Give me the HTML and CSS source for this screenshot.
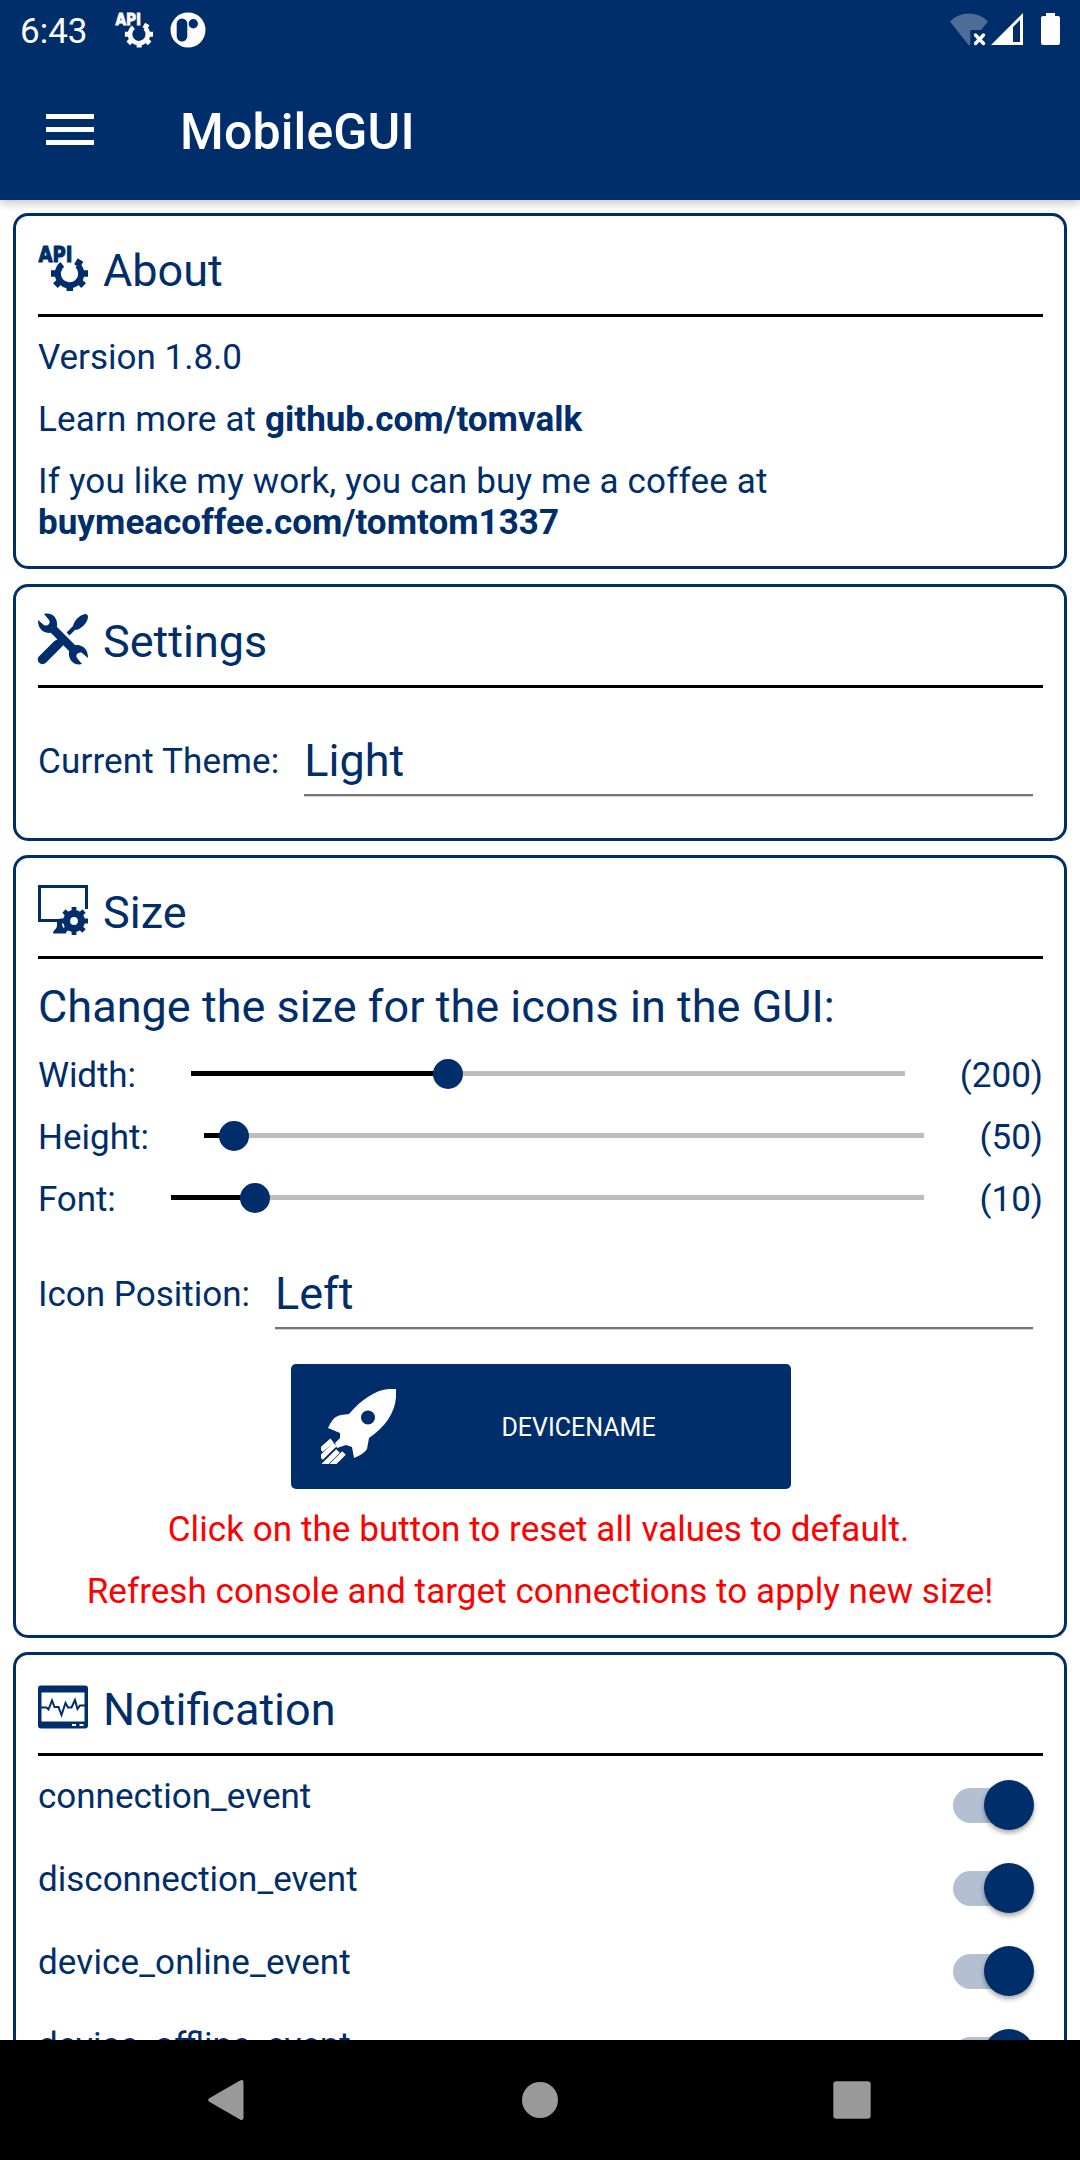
FILE: index.html
```html
<!DOCTYPE html>
<html lang="en">
<head>
<meta charset="utf-8">
<title>MobileGUI</title>
<link rel="stylesheet" href="styles.css">
</head>
<body>
<div class="screen">
  <header class="top">
    <div class="status">
      <span class="clock">6:43</span>
      <svg class="st-api" viewBox="0 0 50 50">
        <text x=".5" y="19" class="api-text" textLength="34" lengthAdjust="spacingAndGlyphs">API</text>
        <path d="M24.3 21.4A11.7 11.7 0 1 0 39.6 22.2" fill="none" stroke="currentColor" stroke-width="6"/>
        <path d="M19 30.5h-6M21 39l-3.6 3.6M31.8 42v6M42 39l3.6 3.6M44 30.5h6M39 23l3.5-6" fill="none" stroke="currentColor" stroke-width="6.6"/>
      </svg>
      <svg class="st-p" viewBox="0 0 36 36"><path fill="currentColor" fill-rule="evenodd" d="M18 .5a17.5 17.5 0 1 1 0 35a17.5 17.5 0 0 1 0-35zM12 6.5a5.3 5.3 0 0 0-5.3 5.3v12.4a5.3 5.3 0 0 0 10.6 0V11.8a5.3 5.3 0 0 0-5.3-5.3zM23.3 7a4.7 4.7 0 1 0 0 9.4a4.7 4.7 0 0 0 0-9.4z"/></svg>
      <span class="spring"></span>
      <svg class="st-wifi" viewBox="0 0 38 33"><path fill="#fff" fill-opacity=".3" d="M0 8.5C10-2.3 28-2.3 38 8.5L31 17H20.3v14.3L19 32.5z"/><path d="M25.5 22l8 8.5M33.5 22l-8 8.5" stroke="#fff" stroke-width="3.4" stroke-linecap="round"/></svg>
      <svg class="st-signal" viewBox="0 0 32 32"><path fill="#fff" fill-rule="evenodd" d="M32 0v32H0zM22 14v15h7V7z"/></svg>
      <svg class="st-batt" viewBox="0 0 19 32"><path fill="#fff" d="M5 0h9v3h3q2 0 2 2v25q0 2-2 2H2q-2 0-2-2V5q0-2 2-2h3z"/></svg>
    </div>
    <div class="appbar">
      <span class="menu"><i></i><i></i><i></i></span>
      <h1>MobileGUI</h1>
    </div>
  </header>

  <main class="content">
    <section class="card about">
      <div class="head">
        <svg class="icon" viewBox="0 0 50 50">
          <text x=".5" y="19" class="api-text" textLength="34" lengthAdjust="spacingAndGlyphs">API</text>
          <path d="M24.3 21.4A11.7 11.7 0 1 0 39.6 22.2" fill="none" stroke="currentColor" stroke-width="6"/>
          <path d="M19 30.5h-6M21 39l-3.6 3.6M31.8 42v6M42 39l3.6 3.6M44 30.5h6M39 23l3.5-6" fill="none" stroke="currentColor" stroke-width="6.6"/>
        </svg>
        <h2>About</h2>
      </div>
      <p>Version 1.8.0</p>
      <p><span class="learn">Learn more at </span><b>github.com/tomvalk</b></p>
      <p><span class="coffee">If you like my work, you can buy me a coffee at</span><br><b class="link">buymeacoffee.com/tomtom1337</b></p>
    </section>

    <section class="card settings">
      <div class="head">
        <svg class="icon" viewBox="0 0 50 50">
          <path d="M4.5 45.5L19 31" stroke="currentColor" stroke-width="9.5" stroke-linecap="round"/>
          <path d="M18 26.5l6 6" stroke="currentColor" stroke-width="4"/>
          <path d="M30 20l9-9" stroke="currentColor" stroke-width="4"/>
          <path fill="currentColor" d="M35 13c0-5 6-12 12-13q3 0 3 3c-.5 6-7 12-12 13z"/>
          <path d="M13 13L38 38" stroke="currentColor" stroke-width="8.5"/>
          <path fill="currentColor" d="M6 0c8-2 14 4 13 12c-1 6-7 8-11 6.5C3 17 0 13 0 6l6.500 5.5q3 .5 4.5-1.5t0-4z"/>
          <path fill="currentColor" d="M44 50c-8 2-14-4-13-12c1-6 7-8 11-6.5c5 1.5 8 5.5 8 12.5l-6.5-5.5q-3-.5-4.5 1.5t0 4z"/>
        </svg>
        <h2>Settings</h2>
      </div>
      <div class="field"><label>Current Theme:</label><div class="select">Light</div></div>
    </section>

    <section class="card size">
      <div class="head">
        <svg class="icon" viewBox="0 0 50 50">
          <path d="M22 35.5H1.5v-34h47V24" fill="none" stroke="currentColor" stroke-width="3"/>
          <path fill="currentColor" d="M19 35h6l3 7v6.5H15q0-2.5 2-4q2-2 2-4z"/>
          <circle cx="36" cy="36" r="12.5" fill="#fff"/>
          <circle cx="36" cy="36" r="7.4" fill="none" stroke="currentColor" stroke-width="7"/>
          <path d="M36 22v5M36 45v5M22 36h5M45 36h5M26 26l3.7 3.7M42.3 42.3l3.7 3.7M26 46l3.7-3.7M42.3 29.7l3.7-3.7" stroke="currentColor" stroke-width="4.8"/>
        </svg>
        <h2>Size</h2>
      </div>
      <h3>Change the size for the icons in the GUI:</h3>
      <div class="slide"><label>Width:</label><div class="track"><i class="fill" style="width:257.5px"></i><i class="thumb"></i></div><span>(200)</span></div>
      <div class="slide wide"><label>Height:</label><div class="track"><i class="fill" style="width:30.5px"></i><i class="thumb"></i></div><span>(50)</span></div>
      <div class="slide"><label>Font:</label><div class="track"><i class="fill" style="width:84.5px"></i><i class="thumb"></i></div><span>(10)</span></div>
      <div class="field"><label>Icon Position:</label><div class="select">Left</div></div>
      <div class="device">
        <svg class="rocket" viewBox="0 0 75 75">
          <path fill="#fff" fill-rule="evenodd" d="M75 0v8C74 24 64 38 48 49L46 60Q43 65 33 69L31 58L25 56L16 59L14 54L19 49V44L7 39L9 35Q13 27 20 26L28 25C40 11 54 1 68 0zM47 21.5a7 7 0 1 0 0 14a7 7 0 0 0 0-14z"/>
          <path stroke="#fff" stroke-width="5" d="M0 61l11-9.500M0 69l14-13.500M2 77l15-15M10 77l13-13" fill="none"/>
        </svg>
        <span>DEVICENAME</span>
      </div>
      <p class="warn reset">Click on the button to reset all values to default.</p>
      <p class="warn refresh">Refresh console and target connections to apply new size!</p>
    </section>

    <section class="card notify">
      <div class="head">
        <svg class="icon" viewBox="0 0 50 50">
          <path fill="currentColor" fill-rule="evenodd" d="M3 3.5h44q3 0 3 3v37q0 3-3 3H3q-3 0-3-3v-37q0-3 3-3zM3.5 10.5v29h43v-29zM34 42v2h4v-2zM41.5 42v2h4v-2z"/>
          <path d="M3 25.5h5.5l2 2l3.5-9l2.5 6.5h4l3 8l4-12l2.5 4.5h3.5l3.5-7.5l2.5 9l2.5-3.5H47" fill="none" stroke="currentColor" stroke-width="2"/>
        </svg>
        <h2>Notification</h2>
      </div>
      <div class="row"><span>connection_event</span><div class="switch"><i></i></div></div>
      <div class="row"><span>disconnection_event</span><div class="switch"><i></i></div></div>
      <div class="row"><span class="online">device_online_event</span><div class="switch"><i></i></div></div>
      <div class="row"><span>device_offline_event</span><div class="switch"><i></i></div></div>
    </section>
  </main>

  <nav class="nav">
    <svg viewBox="0 0 40 40"><path fill="#999" d="M.9 18.5L32 .6Q35.5-1 35.5 2.5v35Q35.5 41 32 39.4L.9 21.5q-1.600-1.5 0-3z"/></svg>
    <svg viewBox="0 0 40 40"><circle cx="20" cy="20" r="18" fill="#999"/></svg>
    <svg viewBox="0 0 40 40"><rect x="1.300" y="1.3" width="37.4" height="37.4" rx="3" fill="#999"/></svg>
  </nav>
</div>
</body>
</html>
```

FILE: styles.css
```css
* { box-sizing: border-box; margin: 0; padding: 0; }
body {
  width: 1080px;
  height: 2160px;
  overflow: hidden;
  background: #fff;
  color: #002e6a;
  font-family: Roboto, "Liberation Sans", sans-serif;
  font-size: 35px;
  line-height: 41px;
}
svg { display: block; flex: none; overflow: visible; }
i { display: block; }
.api-text { font: 700 22px "DejaVu Sans", sans-serif; fill: currentColor; stroke: currentColor; stroke-width: 1.1; }

.screen { display: flex; flex-direction: column; height: 2160px; }

.top {
  position: relative;
  flex: none;
  height: 200px;
  background: #002e6a;
  color: #fff;
  box-shadow: 0 2px 10px rgba(0, 0, 0, .28);
}
.status { display: flex; height: 60px; padding: 0 20px; }
.clock { width: 95px; padding-top: 11px; }
.st-api { width: 38px; height: 38px; margin-top: 11px; }
.st-p { width: 36px; height: 36px; margin: 12px 0 0 17px; }
.spring { flex: 1; }
.st-wifi { width: 38px; height: 33px; margin-top: 13px; }
.st-signal { width: 32px; height: 32px; margin: 13px 0 0 3px; }
.st-batt { width: 19px; height: 32px; margin: 13px 0 0 18px; }

.appbar { display: flex; align-items: center; height: 140px; padding: 0 46px; }
.menu { display: grid; gap: 8px; width: 48px; margin-bottom: 1px; }
.menu i { height: 5px; background: #fff; }
h1 { margin: 5px 0 0 86px; font-size: 50px; line-height: 59px; font-weight: 500; letter-spacing: .15px; }

.content { flex: 1; min-height: 0; overflow: hidden; padding: 13px 13px 0; }
.card {
  margin-bottom: 14px;
  padding: 27px 21px 23px 22px;
  border: 3px solid #002e6a;
  border-radius: 15px;
}
.about { height: 356px; margin-bottom: 15px; }
.settings { height: 257px; }
.size { height: 783px; }

.head { display: flex; height: 74px; border-bottom: 3px solid #000; }
.icon { width: 50px; height: 50px; }
h2, h3 { font-size: 45px; line-height: 53px; font-weight: 400; }
h2 { margin: 1px 0 0 15px; }
.head + p { margin-top: 20px; }
p + p { margin-top: 21px; }
.learn { letter-spacing: .15px; }
.coffee { letter-spacing: .17px; }
.link { letter-spacing: .04px; }

.field { display: flex; align-items: flex-start; margin-top: 46px; }
.field label { margin-top: 7px; }
.settings label { letter-spacing: .15px; }
.select {
  flex: 1;
  margin: 0 10px 0 25px;
  padding-bottom: 7px;
  font-size: 45px;
  line-height: 53px;
  border-bottom: 2px solid #757575;
  box-shadow: 0 1px #d2d2d2;
}

h3 { margin: 21px 0 22px; letter-spacing: .03px; }
.slide { display: flex; align-items: center; height: 41px; margin-bottom: 21px; }
.slide label { letter-spacing: -.12px; }
.wide label { letter-spacing: 0; }
.track { display: flex; align-items: center; flex: 1; height: 5px; margin: -4px 55px 0; background: #bdbdbd; }
.fill { height: 5px; background: #000; }
.thumb { flex: none; width: 30px; height: 30px; margin-left: -15px; border-radius: 50%; background: #002e6a; }
.size .field { margin-top: 47px; }
.device {
  display: flex;
  align-items: center;
  width: 500px;
  height: 125px;
  margin: 35px auto 20px;
  padding: 0 30px;
  border-radius: 5px;
  background: #002e6a;
  color: #fff;
  font-size: 25px;
}
.rocket { width: 75px; height: 75px; overflow: hidden; }
.device span { flex: 1; padding: 2px 0 0 1px; text-align: center; }
.warn { color: #f00; text-align: center; letter-spacing: .07px; }
.reset { padding-right: 4px; }
.refresh { padding-right: 1px; }

.row { display: flex; justify-content: space-between; height: 83px; padding-top: 20px; }
.online { letter-spacing: .12px; }
.switch {
  display: flex;
  align-items: center;
  justify-content: flex-end;
  width: 81px;
  height: 35px;
  margin: 11.5px 9px 0 0;
  border-radius: 18px;
  background: linear-gradient(90deg, #b2c0d2 60px, transparent 60px);
}
.switch i {
  width: 50px;
  height: 50px;
  border-radius: 50%;
  background: #002e6a;
  box-shadow: 0 3px 5px rgba(0, 0, 0, .35);
}

.nav { display: flex; flex: none; align-items: center; justify-content: center; gap: 272px; height: 120px; background: #000; }
.nav svg { width: 40px; height: 40px; }
```
